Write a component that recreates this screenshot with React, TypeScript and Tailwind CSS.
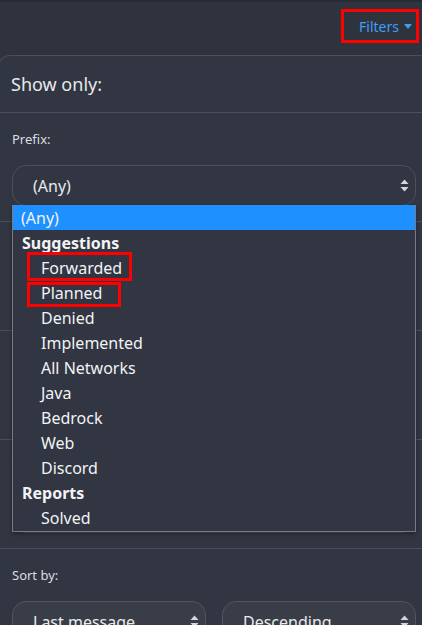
import React from "react";

type Opt = { label: string; group?: boolean; selected?: boolean };

const options: Opt[] = [
  { label: "(Any)", selected: true },
  { label: "Suggestions", group: true },
  { label: "Forwarded" },
  { label: "Planned" },
  { label: "Denied" },
  { label: "Implemented" },
  { label: "All Networks" },
  { label: "Java" },
  { label: "Bedrock" },
  { label: "Web" },
  { label: "Discord" },
  { label: "Reports", group: true },
  { label: "Solved" },
];

function Arrows() {
  return (
    <svg width="9" height="13" viewBox="0 0 9 13" className="shrink-0">
      <path d="M4.5 0.5 L8.5 5 L0.5 5 Z" fill="#d4d6da" />
      <path d="M4.5 12.5 L8.5 8 L0.5 8 Z" fill="#d4d6da" />
    </svg>
  );
}

function FakeSelect({ value, light }: { value: string; light?: boolean }) {
  return (
    <div
      className={
        "h-[41px] w-full rounded-[14px] border flex items-center justify-between pl-[20px] pr-[6px] text-[16px] text-[#e9eaec] " +
        (light ? "bg-[#383d48] border-[#50555f]" : "bg-[#313642] border-[#4b505a]")
      }
    >
      <span>{value}</span>
      <Arrows />
    </div>
  );
}

function Section({ label, children }: { label: string; children: React.ReactNode }) {
  return (
    <div className="border-t border-[#4a4f59] pl-[13px] pr-[8px] pt-[16px] pb-[15px]">
      <div className="h-[20px] leading-5 text-[13px] text-[#dcdde0]">{label}</div>
      <div className="mt-[16px]">{children}</div>
    </div>
  );
}

export default function App() {
  return (
    <div className="w-[422px] h-[625px] overflow-hidden bg-[#2e333e] border-t-2 border-[#262a32] font-['Noto_Sans',sans-serif] text-white">
      <div className="h-[53px] flex items-start justify-end pt-[7px] pr-[3px]">
        <button className="h-[34px] w-[78px] border-[3px] border-[#ff0000] flex items-center justify-end gap-[5px] pr-[4px] text-[14px] text-[#3f9ef6]">
          <span>Filters</span>
          <svg width="8" height="5" viewBox="0 0 8 5">
            <path d="M0 0 L8 0 L4 5 Z" fill="#3f9ef6" />
          </svg>
        </button>
      </div>

      <div className="relative ml-[-2px] w-[426px] rounded-tl-[12px] border-t border-l border-[#4a4f5a] bg-[#313642]">
        <div className="h-[56px] flex items-center pl-[12px] text-[18px] text-[#e8e9eb]">
          Show only:
        </div>

        <Section label="Prefix:">
          <FakeSelect value="(Any)" />
        </Section>
        <Section label="Status:">
          <FakeSelect value="(Any)" light />
        </Section>
        <Section label="Network:">
          <FakeSelect value="(Any)" light />
        </Section>
        <Section label="Type:">
          <FakeSelect value="(Any)" light />
        </Section>
        <Section label="Sort by:">
          <div className="flex gap-[16px]">
            <FakeSelect value="Last message" light />
            <FakeSelect value="Descending" light />
          </div>
        </Section>

        {/* open native list */}
        <div className="absolute left-[13px] top-[149px] w-[404px] h-[327px] bg-[#313642] border-x border-b border-[#787b82] shadow-[0_2px_4px_rgba(0,0,0,0.35)] text-[16px] text-[#f2f3f5]">
          {options.map((o) => (
            <div
              key={o.label}
              className={
                "h-[25px] flex items-center " +
                (o.selected
                  ? "bg-[#1e90ff] pl-[8px]"
                  : o.group
                  ? "pl-[9px] font-bold"
                  : "pl-[28px]")
              }
            >
              {o.label}
            </div>
          ))}
          <div className="absolute left-[14px] top-[47px] w-[105px] h-[29px] border-[3px] border-[#ff0000]" />
          <div className="absolute left-[14px] top-[77px] w-[94px] h-[25px] border-[3px] border-[#ff0000]" />
        </div>
      </div>
    </div>
  );
}
